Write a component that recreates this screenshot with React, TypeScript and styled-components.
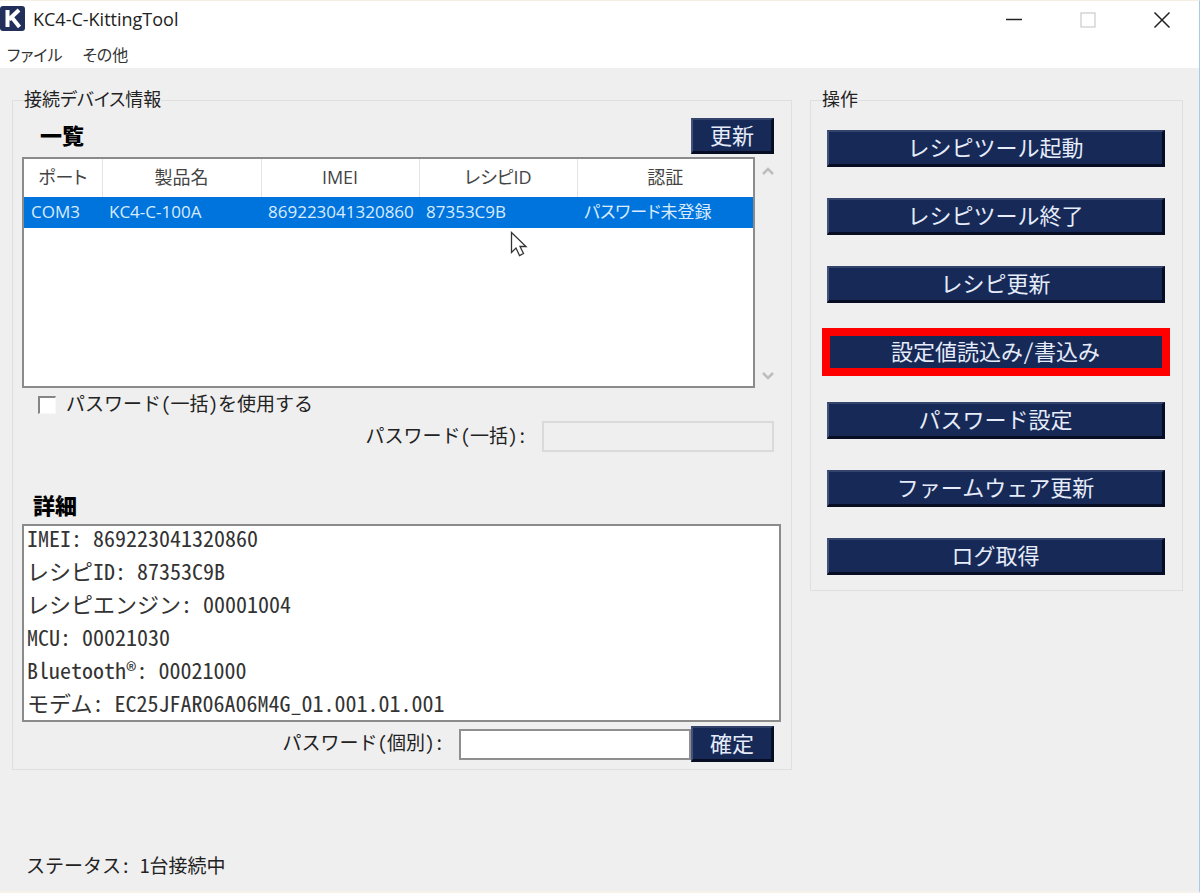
import React from "react";
import styled, { createGlobalStyle } from "styled-components";

const uiFont = `"Open Sans", "Noto Sans CJK JP", sans-serif`;
const formFont = `"Noto Sans CJK JP", sans-serif`;

const GlobalStyle = createGlobalStyle`
  *, *::before, *::after { box-sizing: border-box; }
  body { margin: 0; background: #efefef; color: #222; font-family: ${formFont}; }
  button, input { font-family: inherit; }
`;

const Window = styled.div`
  min-height: 100vh;
  display: flex;
  flex-direction: column;
  background: #efefef;
  border-top: 1px solid #f3efe2;
  border-right: 1px solid #a9c9ee;
  border-bottom: 2px solid #f6f1ea;
`;

const TitleBar = styled.header`
  display: flex;
  align-items: center;
  height: 37px;
  background: #fff;
  font-family: ${uiFont};
`;

const Title = styled.h1`
  flex: 1;
  margin: 0 0 0 8px;
  padding-bottom: 2px;
  font-size: 18px;
  font-weight: 400;
  line-height: 24px;
`;

const WindowButton = styled.button`
  display: flex;
  align-items: center;
  justify-content: center;
  width: 74px;
  height: 37px;
  padding: 0;
  border: 0;
  background: transparent;
`;

const MenuBar = styled.nav`
  display: flex;
  gap: 20px;
  height: 30px;
  padding: 0 7px;
  background: #fff;
`;

const MenuItem = styled.button`
  padding: 2px 0 0;
  border: 0;
  background: transparent;
  color: #333;
  font-size: 16px;
  line-height: 28px;
  font-feature-settings: "palt";
`;

const Content = styled.main`
  flex: 1;
  display: grid;
  grid-template-columns: minmax(0, 780fr) minmax(0, 373fr);
  align-items: start;
  gap: 18px;
  padding: 20px 16px 0 12px;
`;

const Group = styled.fieldset<{ $inset: string }>`
  min-width: 0;
  margin: 0;
  padding: ${(p) => p.$inset};
  border: 1px solid #dfdfdf;
`;

const Legend = styled.legend<{ $indent: number }>`
  margin-left: ${(p) => p.$indent}px;
  padding: 0 0 4px;
  font-size: 18px;
  line-height: 20px;
  font-feature-settings: "palt";
`;

const HeadingRow = styled.div`
  display: flex;
  justify-content: space-between;
  align-items: center;
  padding: 6px 7px 3px 18px;
`;

const Heading = styled.h2`
  margin: 0;
  padding-bottom: 4px;
  color: #000;
  font-size: 22px;
  font-weight: 900;
  line-height: 28px;
`;

const DetailHeading = styled(Heading)`
  margin: 38px 0 2px 11px;
`;

const ToolButton = styled.button<{ $small?: boolean }>`
  flex: none;
  width: ${(p) => (p.$small ? "83px" : "100%")};
  height: ${(p) => (p.$small ? 36 : 37)}px;
  padding: 0 0 4px;
  border: solid;
  border-width: 2px 3px 3px 2px;
  border-color: #33436b #070d22 #070d22 #44527a;
  background: #172a57;
  color: #e6ecfa;
  font-size: 22px;
  line-height: 26px;
`;

const ListArea = styled.div`
  position: relative;
  display: flex;
  height: 231px;
`;

const ListBox = styled.div`
  flex: 1;
  min-width: 0;
  border: 2px solid #8b8b8b;
  background: #fff;
`;

const ScrollTrack = styled.div`
  display: flex;
  flex-direction: column;
  justify-content: space-between;
  align-items: center;
  width: 26px;
  padding: 8px 0 6px;
`;

const DeviceTable = styled.table`
  width: 100%;
  table-layout: fixed;
  border-collapse: collapse;
  font-family: ${uiFont};
  font-feature-settings: "palt";
  text-align: left;
`;

const HeadCell = styled.th`
  height: 38px;
  padding: 0 0 2px;
  border-right: 1px solid #e3e3e3;
  color: #444;
  font-size: 18px;
  font-weight: 400;
  line-height: 24px;
  text-align: center;
  &:last-child { border-right: 0; }
`;

const Cell = styled.td`
  height: 31px;
  padding: 0 0 1px 7px;
  background: #0074dd;
  color: #d9ebff;
  font-size: 17px;
  line-height: 24px;
  white-space: nowrap;
`;

const Pointer = styled.svg`
  position: absolute;
  left: 488px;
  top: 74px;
`;

const CheckRow = styled.label`
  display: flex;
  align-items: center;
  gap: 10px;
  height: 33px;
  padding-left: 16px;
  font-size: 19px;
  line-height: 24px;
`;

const CheckText = styled.span`
  padding-bottom: 4px;
`;

const CheckBox = styled.input`
  appearance: none;
  width: 18px;
  height: 18px;
  margin: 0;
  border: solid;
  border-width: 2px 1px 1px 2px;
  border-color: #858585 #f8f8f8 #f8f8f8 #858585;
  background: #fff;
`;

const FieldRow = styled.div<{ $top?: number }>`
  display: flex;
  align-items: center;
  justify-content: flex-end;
  padding: ${(p) => p.$top ?? 0}px 7px 0 0;
`;

const FieldLabel = styled.label`
  margin-right: 15px;
  padding-bottom: 4px;
  font-size: 19px;
  line-height: 24px;
`;

const PasswordInput = styled.input`
  width: 232px;
  height: 31px;
  padding: 0 6px;
  border: 2px solid #8f8f8f;
  border-radius: 0;
  background: #fff;
  font-size: 18px;
  &:disabled { border-color: #dadada; background: #efefef; }
`;

const DetailBox = styled.div`
  height: 198px;
  padding: 0 0 0 3px;
  border: 2px solid #8b8b8b;
  background: #fff;
`;

const DetailLine = styled.p`
  margin: 0;
  height: 33px;
  color: #333;
  font-size: 22px;
  line-height: 23px;
  white-space: pre;
`;

const Actions = styled.div`
  display: flex;
  flex-direction: column;
  gap: 31px;
  padding-top: 18px;
`;

const Action = styled.div<{ $marked?: boolean }>`
  position: relative;
  display: flex;
  &::after {
    content: "";
    display: ${(p) => (p.$marked ? "block" : "none")};
    position: absolute;
    inset: -6px -5px -5px;
    border: 8px solid #ff0000;
    pointer-events: none;
  }
`;

const StatusBar = styled.footer`
  padding: 0 26px 14px;
  font-size: 19px;
  line-height: 24px;
`;

const Half = styled.span`
  font-feature-settings: "hwid";
  white-space: pre;
`;

/* Sets Latin letters, digits and punctuation half as wide as the kana beside them. */
function Grid({ text }: { text: string }) {
  return (
    <>
      {text.split(/([\x20-\x7e®]+)/).map((part, i) =>
        i % 2 ? <Half key={i}>{part}</Half> : part
      )}
    </>
  );
}

const columns = [
  { name: "ポート", width: 78 },
  { name: "製品名", width: 159 },
  { name: "IMEI", width: 158 },
  { name: "レシピID", width: 158 },
  { name: "認証", width: 176 },
];
const totalWidth = columns.reduce((sum, c) => sum + c.width, 0);

const devices = [["COM3", "KC4-C-100A", "869223041320860", "87353C9B", "パスワード未登録"]];

const details = [
  "IMEI: 869223041320860",
  "レシピID: 87353C9B",
  "レシピエンジン: 00001004",
  "MCU: 00021030",
  "Bluetooth®: 00021000",
  "モデム: EC25JFAR06A06M4G_01.001.01.001",
];

const actions = [
  "レシピツール起動",
  "レシピツール終了",
  "レシピ更新",
  "設定値読込み/書込み",
  "パスワード設定",
  "ファームウェア更新",
  "ログ取得",
];

export default function App() {
  return (
    <>
      <GlobalStyle />
      <Window>
        <TitleBar>
          <svg width="25" height="30" viewBox="0 0 25 30" aria-hidden="true">
            <rect x="0" y="1" width="25" height="25" rx="3" fill="#222f5b" />
            <path d="M7.500 5v17M19 5L9 14.500M11.500 12L19.500 22" stroke="#fff" strokeWidth="4" fill="none" />
          </svg>
          <Title>KC4-C-KittingTool</Title>
          <WindowButton aria-label="最小化">
            <svg width="18" height="18" viewBox="0 0 18 18">
              <path d="M1 8.500h16" stroke="#222" strokeWidth="1.500" />
            </svg>
          </WindowButton>
          <WindowButton aria-label="最大化" disabled>
            <svg width="18" height="18" viewBox="0 0 18 18">
              <rect x="2" y="2" width="14" height="14" fill="none" stroke="#cfcfcf" strokeWidth="1.300" />
            </svg>
          </WindowButton>
          <WindowButton aria-label="閉じる">
            <svg width="18" height="18" viewBox="0 0 18 18">
              <path d="M1.500 1.500l15 15M16.500 1.500l-15 15" stroke="#222" strokeWidth="1.500" />
            </svg>
          </WindowButton>
        </TitleBar>
        <MenuBar>
          <MenuItem>ファイル</MenuItem>
          <MenuItem>その他</MenuItem>
        </MenuBar>

        <Content>
          <Group $inset="0 10px 7px 9px">
            <Legend $indent={2}>接続デバイス情報</Legend>
            <HeadingRow>
              <Heading>一覧</Heading>
              <ToolButton $small>更新</ToolButton>
            </HeadingRow>
            <ListArea>
              <ListBox>
                <DeviceTable>
                  <colgroup>
                    {columns.map((c) => (
                      <col key={c.name} style={{ width: `${(c.width / totalWidth) * 100}%` }} />
                    ))}
                  </colgroup>
                  <thead>
                    <tr>
                      {columns.map((c) => (
                        <HeadCell key={c.name} scope="col">{c.name}</HeadCell>
                      ))}
                    </tr>
                  </thead>
                  <tbody>
                    {devices.map((row) => (
                      <tr key={row[0]}>
                        {row.map((value) => (
                          <Cell key={value}>{value}</Cell>
                        ))}
                      </tr>
                    ))}
                  </tbody>
                </DeviceTable>
              </ListBox>
              <ScrollTrack>
                <svg width="14" height="12" viewBox="0 0 14 12" aria-hidden="true">
                  <path d="M2 9l5-5 5 5" fill="none" stroke="#bdbdbd" strokeWidth="2.500" />
                </svg>
                <svg width="14" height="12" viewBox="0 0 14 12" aria-hidden="true">
                  <path d="M2 3l5 5 5-5" fill="none" stroke="#bdbdbd" strokeWidth="2.500" />
                </svg>
              </ScrollTrack>
              <Pointer width="18" height="26" viewBox="0 0 18 26" aria-hidden="true">
                <path d="M1.500 1.500v20l4.500-4.500 3.500 7.500 4-2-3.500-7h6z" fill="#fff" stroke="#333" strokeWidth="1.300" />
              </Pointer>
            </ListArea>
            <CheckRow>
              <CheckBox type="checkbox" />
              <CheckText><Grid text="パスワード(一括)を使用する" /></CheckText>
            </CheckRow>
            <FieldRow>
              <FieldLabel htmlFor="bulk-password"><Grid text="パスワード(一括):" /></FieldLabel>
              <PasswordInput id="bulk-password" type="password" disabled />
            </FieldRow>
            <DetailHeading>詳細</DetailHeading>
            <DetailBox>
              {details.map((line) => (
                <DetailLine key={line}><Grid text={line} /></DetailLine>
              ))}
            </DetailBox>
            <FieldRow $top={4}>
              <FieldLabel htmlFor="device-password"><Grid text="パスワード(個別):" /></FieldLabel>
              <PasswordInput id="device-password" type="password" />
              <ToolButton $small>確定</ToolButton>
            </FieldRow>
          </Group>

          <Group $inset="0 17px 15px 16px">
            <Legend $indent={-5}>操作</Legend>
            <Actions>
              {actions.map((name) => (
                <Action key={name} $marked={name.startsWith("設定値")}>
                  <ToolButton><Grid text={name} /></ToolButton>
                </Action>
              ))}
            </Actions>
          </Group>
        </Content>
        <StatusBar><Grid text="ステータス: 1台接続中" /></StatusBar>
      </Window>
    </>
  );
}
